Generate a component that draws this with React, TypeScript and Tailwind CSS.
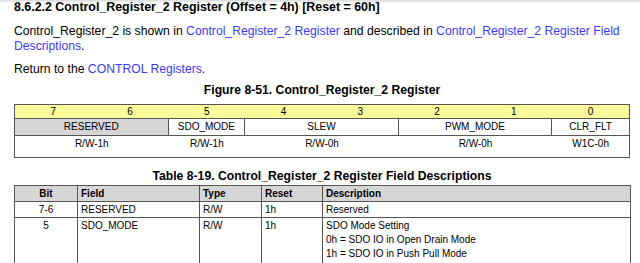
import React from 'react';

const linkCls = 'text-[#3b3bf2]';

const RegisterFigure: React.FC = () => {
  const bits = ['7', '6', '5', '4', '3', '2', '1', '0'];
  return (
    <div className="w-[616px] border border-[#555] text-[10px] text-black">
      {/* bit numbers */}
      <div className="grid grid-cols-8 h-[14px] bg-[#fbfb9c] border-b border-[#555]">
        {bits.map((b) => (
          <div key={b} className="text-center leading-[13px]">
            {b}
          </div>
        ))}
      </div>
      {/* field names */}
      <div className="grid grid-cols-8 h-[17px] border-b border-[#555]">
        <div className="col-span-2 bg-[#d6d6d6] border-r border-[#555] text-center leading-[16px]">RESERVED</div>
        <div className="col-span-1 border-r border-[#555] text-center leading-[16px]">SDO_MODE</div>
        <div className="col-span-2 border-r border-[#555] text-center leading-[16px]">SLEW</div>
        <div className="col-span-2 border-r border-[#555] text-center leading-[16px]">PWM_MODE</div>
        <div className="col-span-1 text-center leading-[16px]">CLR_FLT</div>
      </div>
      {/* access */}
      <div className="grid grid-cols-8 h-[21px]">
        <div className="col-span-2 text-center leading-[16px]">R/W-1h</div>
        <div className="col-span-1 text-center leading-[16px]">R/W-1h</div>
        <div className="col-span-2 text-center leading-[16px]">R/W-0h</div>
        <div className="col-span-2 text-center leading-[16px]">R/W-0h</div>
        <div className="col-span-1 text-center leading-[16px]">W1C-0h</div>
      </div>
    </div>
  );
};

const FieldTable: React.FC = () => {
  const cols = 'grid grid-cols-[63px_122px_62px_61px_1fr]';
  const cell = 'border-r border-[#555] px-[3px]';
  return (
    <div className="w-[617px] border border-[#555] border-b-0 text-[10px] text-black">
      <div className={`${cols} h-[16px] bg-[#d6d6d6] border-b border-[#555] font-bold leading-[15px]`}>
        <div className={`${cell} text-center`}>Bit</div>
        <div className={cell}>Field</div>
        <div className={cell}>Type</div>
        <div className={cell}>Reset</div>
        <div className="px-[3px]">Description</div>
      </div>
      <div className={`${cols} h-[16px] border-b border-[#555] leading-[15px]`}>
        <div className={`${cell} text-center`}>7-6</div>
        <div className={cell}>RESERVED</div>
        <div className={cell}>R/W</div>
        <div className={cell}>1h</div>
        <div className="px-[3px]">Reserved</div>
      </div>
      <div className={`${cols} h-[60px] leading-[14px]`}>
        <div className={`${cell} text-center pt-[1px]`}>5</div>
        <div className={`${cell} pt-[1px]`}>SDO_MODE</div>
        <div className={`${cell} pt-[1px]`}>R/W</div>
        <div className={`${cell} pt-[1px]`}>1h</div>
        <div className="px-[3px] pt-[1px] flex flex-col">
          <span>SDO Mode Setting</span>
          <span>0h = SDO IO in Open Drain Mode</span>
          <span>1h = SDO IO in Push Pull Mode</span>
        </div>
      </div>
    </div>
  );
};

const App: React.FC = () => {
  return (
    <div
      className="relative w-[640px] h-[263px] overflow-hidden bg-white text-black"
      style={{ fontFamily: '"Liberation Sans", Arial, sans-serif' }}
    >
      {/* top edge shadow */}
      <div className="absolute top-0 left-0 right-0 h-[3px] bg-gradient-to-b from-[#d8d8d8] to-transparent" />

      <div className="pl-[14px]">
        <h1 className="text-[12.4px] font-bold leading-[15px]">
          8.6.2.2 Control_Register_2 Register (Offset = 4h) [Reset = 60h]
        </h1>
        <p className="mt-[9px] w-[622px] text-[12.2px] leading-[15px]">
          Control_Register_2 is shown in <span className={linkCls}>Control_Register_2 Register</span> and described in{' '}
          <span className={linkCls}>Control_Register_2 Register Field Descriptions</span>.
        </p>
        <p className="mt-[8px] text-[12.2px] leading-[15px]">
          Return to the <span className={linkCls}>CONTROL Registers</span>.
        </p>

        <div className="w-[616px]">
          <h2 className="mt-[6px] text-center text-[12.2px] font-bold leading-[15px]">
            Figure 8-51. Control_Register_2 Register
          </h2>
          <div className="mt-[6px]">
            <RegisterFigure />
          </div>
          <h2 className="mt-[11px] text-center text-[12.2px] font-bold leading-[15px]">
            Table 8-19. Control_Register_2 Register Field Descriptions
          </h2>
          <div className="mt-[1px]">
            <FieldTable />
          </div>
        </div>
      </div>
    </div>
  );
};

export default App;
